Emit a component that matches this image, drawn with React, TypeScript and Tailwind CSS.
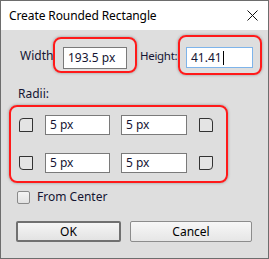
import React from "react";

const font = { fontFamily: '"Noto Sans", "Open Sans", sans-serif' };

function Field({
  value,
  className = "",
  focused = false,
}: {
  value: string;
  className?: string;
  focused?: boolean;
}) {
  return (
    <div
      className={`flex items-center bg-white border pl-[4px] text-[12px] text-[#141432] ${
        focused ? "border-[#7eb4ea]" : "border-[#7a7a7a]"
      } ${className}`}
    >
      <span>{value}</span>
      {focused && <span className="ml-[1px] w-px h-[14px] bg-black" />}
    </div>
  );
}

function Corner({ round }: { round: string }) {
  return (
    <div
      className={`w-[14px] h-[14px] border border-[#333333] bg-[#e4e4e4] ${round}`}
    />
  );
}

function RadiiRow({ left, right }: { left: string; right: string }) {
  return (
    <div className="flex items-center h-[20px]">
      <Corner round={left} />
      <Field value="5 px" className="ml-[12px] w-[65px] h-[20px]" />
      <Field value="5 px" className="ml-[11px] w-[66px] h-[20px]" />
      <div className="ml-[12px]">
        <Corner round={right} />
      </div>
    </div>
  );
}

const redBox =
  "border-2 border-[#ff1a1a] rounded-[8px] shadow-[0_0_3px_rgba(0,0,0,0.35)]";

export default function App() {
  return (
    <div
      className="w-[269px] h-[259px] border border-[#6d6d6d] flex flex-col bg-[#dedede] text-[#141432]"
      style={font}
    >
      <div className="h-[29px] bg-white flex items-center pl-[8px] pr-[10px] shrink-0">
        <span className="text-[12px] tracking-[-0.1px] text-black flex-1">
          Create Rounded Rectangle
        </span>
        <svg width="11" height="11" viewBox="0 0 11 11">
          <path d="M0.5 0.5 L10.5 10.5 M10.5 0.5 L0.5 10.5" stroke="#111" strokeWidth="1" />
        </svg>
      </div>

      <div className="flex flex-col pt-[5px]">
        <div className="flex items-start h-[40px]">
          <span className="ml-[19px] w-[33px] mt-[13px] text-[12px] leading-[16px]">
            Width
          </span>
          <div className={`mt-[2px] w-[84px] h-[36px] pl-[8px] pt-[8px] ${redBox}`}>
            <Field value="193.5 px" className="w-[64px] h-[22px]" />
          </div>
          <span className="ml-[3px] w-[38px] mt-[13px] text-[11.5px] tracking-[-0.3px] leading-[16px] whitespace-nowrap">
            Height:
          </span>
          <div className={`w-[84px] h-[40px] pl-[6px] pt-[10px] ${redBox}`}>
            <Field value="41.41" focused className="w-[67px] h-[21px]" />
          </div>
        </div>

        <span className="ml-[17px] mt-[11px] text-[12px] leading-[16px]">
          Radii:
        </span>

        <div
          className={`ml-[8px] mt-[3px] w-[219px] h-[78px] pl-[8px] pt-[8px] flex flex-col gap-[18px] ${redBox}`}
        >
          <RadiiRow left="rounded-tl-[4px]" right="rounded-tr-[4px]" />
          <RadiiRow left="rounded-bl-[4px]" right="rounded-br-[4px]" />
        </div>

        <div className="flex items-center h-[16px] mt-[6px] pl-[16px]">
          <div className="w-[13px] h-[13px] border border-[#8a8a8a] rounded-[2px] bg-gradient-to-b from-[#f4f4f4] to-[#e2e2e2]" />
          <span className="ml-[7px] text-[12px]">From Center</span>
        </div>

        <div className="flex mt-[16px]">
          <button className="ml-[15px] w-[105px] h-[21px] border-2 border-[#707070] rounded-[2px] bg-gradient-to-b from-[#f5f5f5] to-[#e3e3e3] text-[12px] text-black flex items-center justify-center">
            OK
          </button>
          <button className="ml-[9px] w-[122px] h-[21px] border border-[#8c8c8c] rounded-[2px] bg-gradient-to-b from-[#f7f7f7] to-[#e6e6e6] text-[12px] text-black flex items-center justify-center">
            Cancel
          </button>
        </div>
      </div>
    </div>
  );
}
